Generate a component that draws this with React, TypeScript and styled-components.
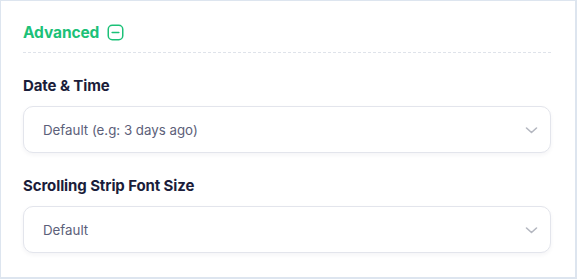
import React from "react";
import styled, { createGlobalStyle } from "styled-components";

const Global = createGlobalStyle`
  html, body { margin: 0; padding: 0; background: #ffffff; }
  * { box-sizing: border-box; }
`;

const Card = styled.div`
  width: 577px;
  height: 279px;
  border: 1px solid #dde5ef;
  border-right-width: 2px;
  border-bottom-width: 2px;
  background: #ffffff;
  padding: 21px 24px 0 22px;
  font-family: Inter, "Noto Sans", sans-serif;
  display: flex;
  flex-direction: column;
`;

const Header = styled.div`
  display: flex;
  align-items: center;
  gap: 8px;
  height: 21px;
`;

const Title = styled.span`
  color: #1cc178;
  font-size: 15.5px;
  font-weight: 700;
  letter-spacing: -0.1px;
`;

const Divider = styled.div`
  margin-top: 9px;
  border-top: 1px dashed #dfe3ea;
`;

const Field = styled.div<{ $top: number }>`
  display: flex;
  flex-direction: column;
  margin-top: ${(p) => p.$top}px;
`;

const Label = styled.label`
  color: #1b1d3a;
  font-size: 15px;
  font-weight: 700;
  line-height: 18px;
  letter-spacing: -0.1px;
`;

const Select = styled.div`
  margin-top: 11px;
  height: 47px;
  border: 1px solid #e3e5ec;
  border-radius: 10px;
  box-shadow: 0 2px 4px rgba(30, 40, 70, 0.05);
  display: flex;
  align-items: center;
  justify-content: space-between;
  padding: 0 11px 0 19px;
  background: #fff;
`;

const Value = styled.span`
  color: #5c6079;
  font-size: 13.3px;
`;

const MinusIcon = () => (
  <svg width="17" height="17" viewBox="0 0 17 17" fill="none">
    <rect x="1.25" y="1.25" width="14.5" height="14.5" rx="4" stroke="#1cc178" strokeWidth="1.5" />
    <line x1="5.2" y1="8.5" x2="11.8" y2="8.5" stroke="#1cc178" strokeWidth="1.6" strokeLinecap="round" />
  </svg>
);

const Chevron = () => (
  <svg width="15" height="14" viewBox="0 0 15 14" fill="none">
    <path d="M2.5 5 L7.5 9.5 L12.5 5" stroke="#b4b7c0" strokeWidth="1.6" strokeLinecap="round" strokeLinejoin="round" />
  </svg>
);

export default function App() {
  return (
    <>
      <Global />
      <Card>
        <Header>
          <Title>Advanced</Title>
          <MinusIcon />
        </Header>
        <Divider />
        <Field $top={24}>
          <Label>Date &amp; Time</Label>
          <Select>
            <Value>Default (e.g: 3 days ago)</Value>
            <Chevron />
          </Select>
        </Field>
        <Field $top={24}>
          <Label>Scrolling Strip Font Size</Label>
          <Select>
            <Value>Default</Value>
            <Chevron />
          </Select>
        </Field>
      </Card>
    </>
  );
}
